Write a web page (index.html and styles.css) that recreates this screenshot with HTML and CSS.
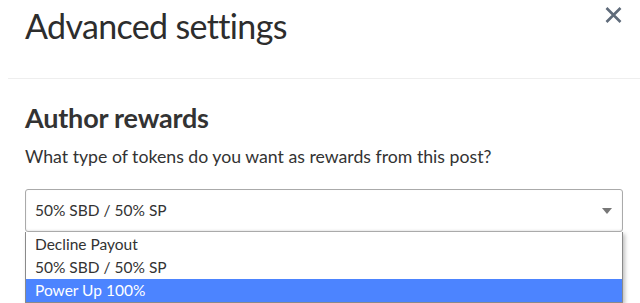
FILE: index.html
```html
<!DOCTYPE html>
<html lang="en">
<head>
    <meta charset="UTF-8">
    <title>Advanced settings</title>
    <link rel="stylesheet" href="styles.css">
</head>
<body>
    <div class="modal">
        <header class="modal-header">
            <h1>Advanced settings</h1>
            <span class="close">
                <svg width="17" height="16" viewBox="0 0 17 16"><path d="M1.5 1 L15.5 15 M15.5 1 L1.5 15" stroke="#5f6b7a" stroke-width="2.6" fill="none"/></svg>
            </span>
        </header>
        <section class="modal-body">
            <h2>Author rewards</h2>
            <p>What type of tokens do you want as rewards from this post?</p>
            <div class="select">
                <div class="select-value">50% SBD / 50% SP<span class="arrow"></span></div>
                <ul class="options">
                    <li>Decline Payout</li>
                    <li>50% SBD / 50% SP</li>
                    <li class="selected">Power Up 100%</li>
                </ul>
            </div>
        </section>
    </div>
</body>
</html>
```

FILE: styles.css
```css
body {
    margin: 0;
    background: #fff;
    color: #333;
    font-family: Lato, "Open Sans", sans-serif;
    overflow: hidden;
}
.modal {
    padding-left: 8px;
}
.modal-header {
    display: flex;
    justify-content: space-between;
    align-items: flex-start;
    height: 78px;
    border-bottom: 1px solid #eee;
}
h1 {
    margin: 0;
    padding: 4px 0 0 17px;
    font-size: 34px;
    font-weight: 400;
    letter-spacing: -0.65px;
    line-height: 44px;
    color: #2d2d2d;
}
.close {
    margin: 7px 18px 0 0;
    line-height: 0;
}
.modal-body {
    padding: 0 17px;
}
h2 {
    margin: 0;
    padding-top: 22px;
    font-size: 27px;
    font-weight: 700;
    letter-spacing: -0.2px;
    line-height: 34px;
    color: #333;
}
p {
    margin: 10px 0 0;
    font-size: 17.7px;
    line-height: 24px;
}
.select {
    margin-top: 20px;
    font-size: 15.5px;
}
.select-value {
    position: relative;
    height: 41px;
    line-height: 41px;
    padding-left: 9px;
    border: 1px solid #aaa;
    border-radius: 3px;
    box-shadow: inset 0 -1px 2px rgba(0, 0, 0, 0.08);
}
.arrow {
    position: absolute;
    right: 10px;
    top: 18px;
    border-left: 5px solid transparent;
    border-right: 5px solid transparent;
    border-top: 6px solid #777;
}
.options {
    list-style: none;
    margin: 0;
    padding: 1px 0 0;
    border: 1px solid #8a8a8a;
    border-top: none;
    box-shadow: 2px 2px 4px rgba(0, 0, 0, 0.25);
}
.options li {
    height: 23px;
    line-height: 23px;
    padding-left: 9px;
}
.options li.selected {
    background: #4c84ff;
    color: #fff;
}
```
